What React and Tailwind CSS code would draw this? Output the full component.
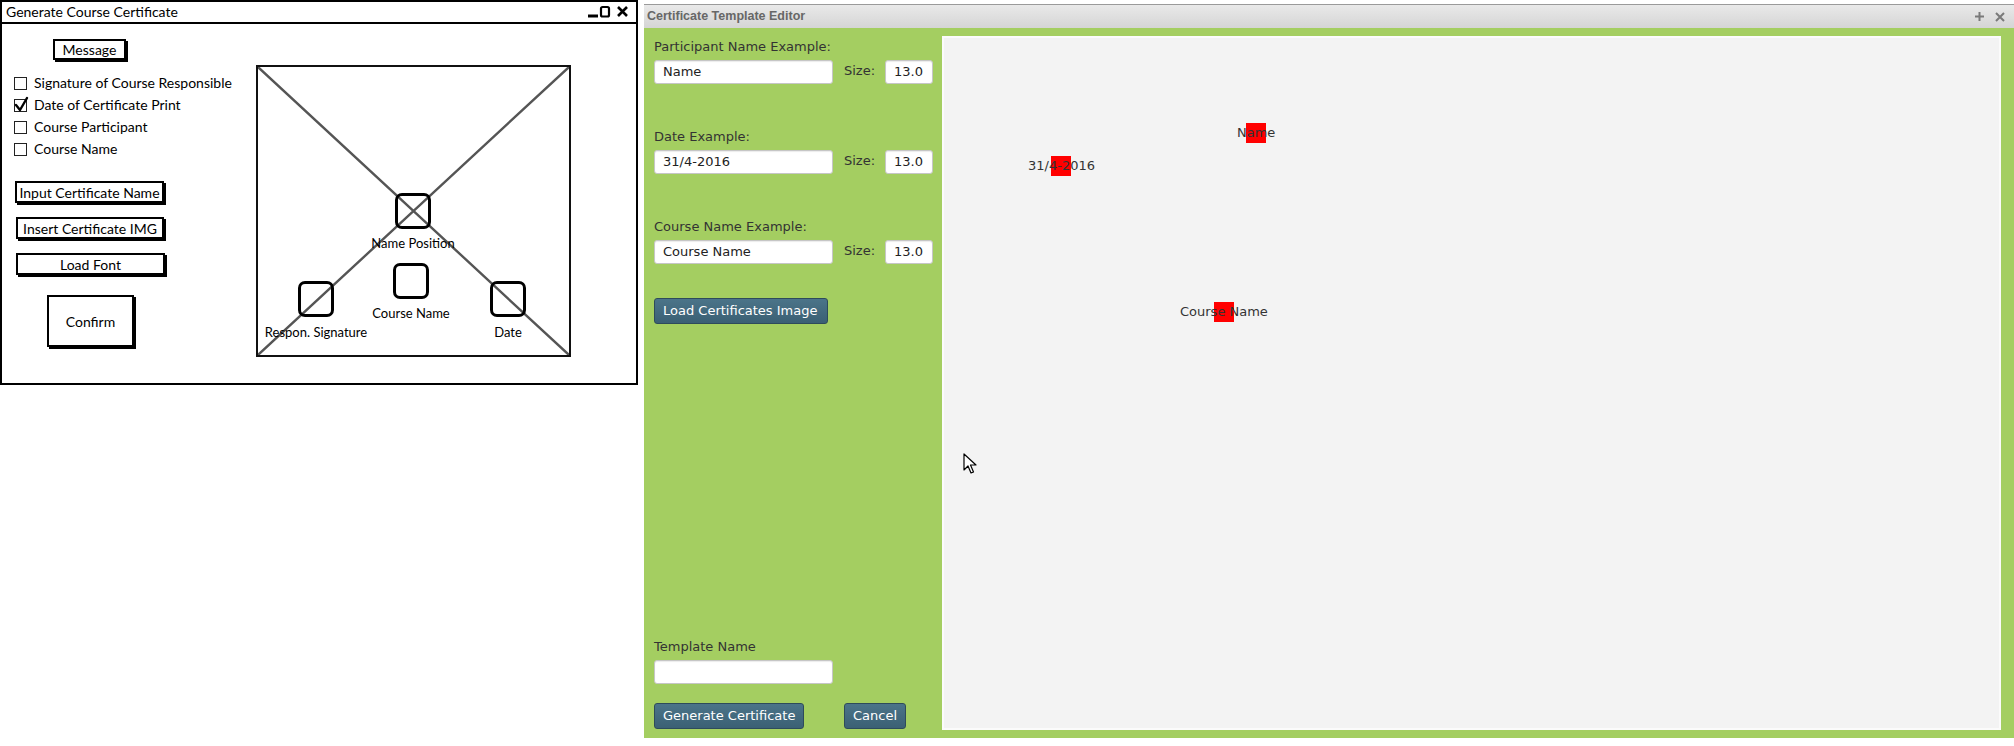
import React from "react";

function SketchButton({ className = "", children }) {
  return (
    <div
      className={
        "flex items-center justify-center whitespace-nowrap border-2 border-black bg-white shadow-[2px_2px_0_#000] text-[14px] text-black " +
        className
      }
    >
      {children}
    </div>
  );
}

function CheckRow({ label, checked }) {
  return (
    <div className="flex h-[22px] items-center">
      <div className="relative h-[13px] w-[13px] border-[1.5px] border-[#222] bg-white">
        {checked && (
          <svg
            className="absolute left-[-1px] top-[-4px]"
            width="15"
            height="16"
            viewBox="0 0 15 16"
          >
            <path d="M2 9 L6 14 L13 2" fill="none" stroke="#000" strokeWidth="2.4" strokeLinecap="round" strokeLinejoin="round" />
          </svg>
        )}
      </div>
      <span className="ml-[7px] text-[14px] text-black leading-none">{label}</span>
    </div>
  );
}

function Slot({ className = "" }) {
  return (
    <div
      className={
        "absolute h-[36px] w-[36px] rounded-[7px] border-[3px] border-black " + className
      }
    />
  );
}

function SlotLabel({ className = "", children }) {
  return (
    <div
      className={
        "absolute -translate-x-1/2 -translate-y-1/2 whitespace-nowrap text-[13px] text-black " + className
      }
    >
      {children}
    </div>
  );
}

function LeftWindow() {
  return (
    <div className="flex h-[385px] w-[638px] shrink-0 flex-col border-2 border-black bg-white font-['Lato',sans-serif]">
      <div className="flex h-[22px] shrink-0 items-center justify-between border-b-2 border-black pl-[4px] pr-[3px]">
        <span className="text-[14px] leading-none text-black">Generate Course Certificate</span>
        <svg width="46" height="14" viewBox="0 0 46 14">
          <path d="M1 11 H11" stroke="#000" strokeWidth="3" />
          <rect x="14" y="2" width="8" height="9.5" rx="1.5" fill="none" stroke="#000" strokeWidth="2.2" />
          <path d="M31 2 L40 11 M40 2 L31 11" stroke="#000" strokeWidth="2.6" />
        </svg>
      </div>
      <div className="flex flex-1">
        <div className="flex w-[254px] shrink-0 flex-col">
          <SketchButton className="ml-[51px] mt-[15px] h-[21px] w-[73px]">Message</SketchButton>
          <div className="ml-[12px] mt-[12px] flex flex-col">
            <CheckRow label="Signature of Course Responsible" />
            <CheckRow label="Date of Certificate Print" checked />
            <CheckRow label="Course Participant" />
            <CheckRow label="Course Name" />
          </div>
          <SketchButton className="ml-[13px] mt-[21px] h-[22px] w-[149px]">Input Certificate Name</SketchButton>
          <SketchButton className="ml-[14px] mt-[14px] h-[22px] w-[148px]">Insert Certificate IMG</SketchButton>
          <SketchButton className="ml-[14px] mt-[14px] h-[22px] w-[149px]">Load Font</SketchButton>
          <SketchButton className="ml-[45px] mt-[20px] h-[52px] w-[87px]">Confirm</SketchButton>
        </div>
        <div className="relative mt-[41px] h-[292px] w-[315px] border-2 border-[#111]">
          <svg className="absolute inset-0 h-full w-full" viewBox="0 0 311 288" preserveAspectRatio="none">
            <path d="M0 0 L311 288 M311 0 L0 288" stroke="#555" strokeWidth="2.4" />
          </svg>
          <Slot className="left-[137px] top-[126px]" />
          <SlotLabel className="left-[155px] top-[177px]">Name Position</SlotLabel>
          <Slot className="left-[135px] top-[196px]" />
          <SlotLabel className="left-[153px] top-[247px]">Course Name</SlotLabel>
          <Slot className="left-[40px] top-[214px]" />
          <SlotLabel className="left-[58px] top-[266px]">Respon. Signature</SlotLabel>
          <Slot className="left-[232px] top-[214px]" />
          <SlotLabel className="left-[250px] top-[266px]">Date</SlotLabel>
        </div>
      </div>
    </div>
  );
}

function FxInput({ value = "", className = "" }) {
  return (
    <div
      className={
        "flex h-[24px] items-center rounded-[3px] border border-[#c6c6c6] bg-white pl-[8px] text-[13px] text-[#222] shadow-[inset_0_1px_1px_rgba(0,0,0,0.08)] " +
        className
      }
    >
      {value}
    </div>
  );
}

function FxButton({ children, className = "" }) {
  return (
    <div
      className={
        "flex h-[26px] items-center whitespace-nowrap rounded-[3px] border border-[#2e4b5b] bg-gradient-to-b from-[#4b7489] to-[#3b6074] pl-[8px] text-[13px] text-white " +
        className
      }
    >
      {children}
    </div>
  );
}

function FieldGroup({ label, value, className = "" }) {
  return (
    <div className={"flex flex-col " + className}>
      <div className="h-[16px] text-[13px] leading-[16px] text-[#333]">{label}</div>
      <div className="mt-[5px] flex items-center">
        <FxInput value={value} className="w-[179px]" />
        <span className="ml-[11px] mb-[2px] text-[13px] text-[#333]">Size:</span>
        <FxInput value="13.0" className="ml-[10px] w-[48px]" />
      </div>
    </div>
  );
}

function Marker({ className = "", boxClass = "", children }) {
  return (
    <>
      <div className={"absolute h-[20px] w-[20px] bg-[#ff0000] " + boxClass} />
      <div className={"absolute h-[16px] whitespace-nowrap text-[13px] leading-[16px] text-[#333] " + className}>
        {children}
      </div>
    </>
  );
}

function RightWindow() {
  return (
    <div className="ml-[6px] mt-[4px] flex h-[734px] w-[1370px] shrink-0 flex-col font-['DejaVu_Sans',sans-serif]">
      <div className="flex h-[24px] shrink-0 items-center justify-between border-t border-[#9a9a9a] bg-gradient-to-b from-[#e9e9e9] to-[#d5d5d5] pl-[3px] pr-[9px]">
        <span className="font-['Liberation_Sans',sans-serif] text-[12.5px] font-bold text-[#676767]">
          Certificate Template Editor
        </span>
        <div className="flex items-center gap-[10px] text-[#7a7a7a]">
          <svg width="11" height="11" viewBox="0 0 11 11">
            <path d="M5.5 1 V10 M1 5.5 H10" stroke="#7a7a7a" strokeWidth="2" />
          </svg>
          <svg width="10" height="10" viewBox="0 0 10 10">
            <path d="M1 1 L9 9 M9 1 L1 9" stroke="#7a7a7a" strokeWidth="2" />
          </svg>
        </div>
      </div>
      <div className="flex flex-1 bg-[#a4ce61] pb-[8px] pr-[13px] pt-[8px]">
        <div className="flex w-[298px] shrink-0 flex-col pl-[10px]">
          <FieldGroup label="Participant Name Example:" value="Name" className="mt-[3px]" />
          <FieldGroup label="Date Example:" value="31/4-2016" className="mt-[45px]" />
          <FieldGroup label="Course Name Example:" value="Course Name" className="mt-[45px]" />
          <FxButton className="mt-[34px] w-[174px]">Load Certificates Image</FxButton>
          <div className="flex-1" />
          <div className="h-[16px] text-[13px] leading-[16px] text-[#333]">Template Name</div>
          <FxInput className="mt-[5px] w-[179px]" />
          <div className="mb-[1px] mt-[19px] flex">
            <FxButton className="w-[150px]">Generate Certificate</FxButton>
            <FxButton className="ml-[40px] w-[62px]">Cancel</FxButton>
          </div>
        </div>
        <div className="relative flex-1 border-2 border-[#fbfbfb] bg-[#f3f3f3]">
          <Marker boxClass="left-[302px] top-[85px]" className="left-[293px] top-[87px]">Name</Marker>
          <Marker boxClass="left-[107px] top-[118px]" className="left-[84px] top-[120px]">31/4-2016</Marker>
          <Marker boxClass="left-[270px] top-[264px]" className="left-[236px] top-[266px]">Course Name</Marker>
          <svg className="absolute left-[19px] top-[415px]" width="14" height="22" viewBox="0 0 14 22">
            <path d="M1 1 L1 17 L5 13 L8 20 L10.5 19 L7.5 12 L13 12 Z" fill="#fff" stroke="#000" strokeWidth="1.2" strokeLinejoin="round" />
          </svg>
        </div>
      </div>
    </div>
  );
}

export default function App() {
  return (
    <div className="flex h-[746px] w-[2014px] items-start overflow-hidden bg-white">
      <LeftWindow />
      <RightWindow />
    </div>
  );
}
